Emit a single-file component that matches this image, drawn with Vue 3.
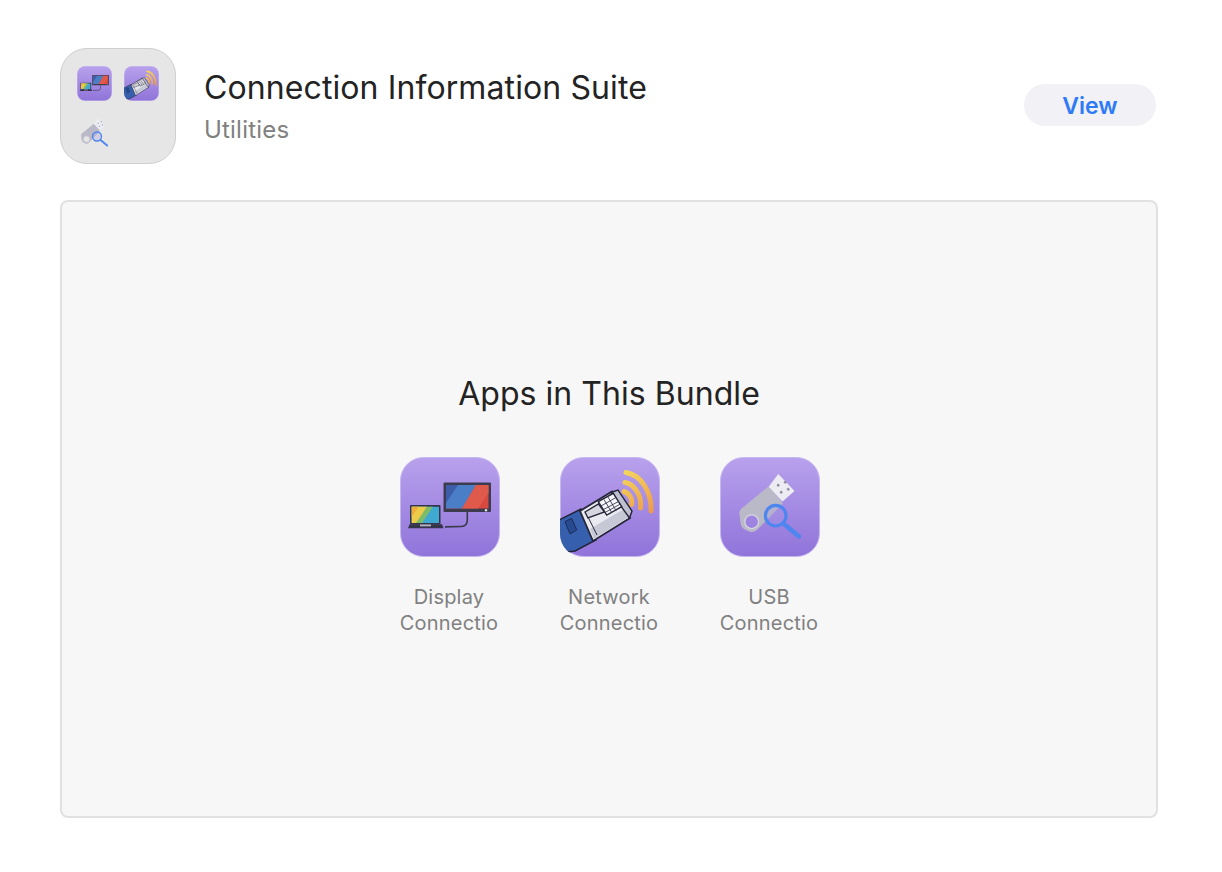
<script setup>
const apps = [
  { icon: '#i-display', line1: 'Display', line2: 'Connectio' },
  { icon: '#i-network', line1: 'Network', line2: 'Connectio' },
  { icon: '#i-usb', line1: 'USB', line2: 'Connectio' },
]
</script>

<template>
  <main class="page">
    <header class="head">
      <div class="tile">
        <svg class="mini" viewBox="0 0 100 100">
          <defs>
            <linearGradient id="g-bg" x1="0" y1="0" x2="0" y2="1">
              <stop offset="0" stop-color="#b8a1ec" />
              <stop offset="1" stop-color="#9074da" />
            </linearGradient>
            <linearGradient id="g-wifi" gradientUnits="userSpaceOnUse" x1="64" y1="14" x2="90" y2="56">
              <stop offset="0" stop-color="#f4d75c" />
              <stop offset="1" stop-color="#ed9a4c" />
            </linearGradient>
            <clipPath id="c-tile"><rect width="100" height="100" rx="23" /></clipPath>
            <clipPath id="c-lap"><rect x="11.500" y="49.500" width="27.500" height="16.500" /></clipPath>
            <symbol id="base" viewBox="0 0 100 100">
              <rect x=".5" y=".5" width="99" height="99" rx="23" fill="url(#g-bg)" stroke="#c6b6f0" />
            </symbol>
            <symbol id="i-display" viewBox="0 0 100 100">
              <use href="#base" />
              <path d="M67.300 55v8q0 6.300-6 6.500L45 69.900" fill="none" stroke="#3a3a4c" stroke-width="1.600" />
              <rect x="43.500" y="25.500" width="47.500" height="29.500" rx="1" fill="#3c3c4e" />
              <rect x="46" y="28" width="42.500" height="23.500" fill="#d9493f" />
              <path d="M46 28H76L62 51.500H46Z" fill="#4a7fc8" />
              <path d="M46 28H58L46 46Z" fill="#3d5da8" />
              <path d="M76 28H88.500V36L78 51.500H62Z" fill="#e05a4c" />
              <circle cx="86" cy="53.300" r="1.200" fill="#e4e4ee" />
              <rect x="10" y="48" width="30.500" height="19.500" rx="1" fill="#35354a" />
              <g clip-path="url(#c-lap)">
                <rect x="11.500" y="49.500" width="27.500" height="16.500" fill="#3fa9d2" />
                <path d="M11.500 49.500H33L22 66H11.500Z" fill="#7fbc6a" />
                <path d="M11.500 49.500H27L16 66H11.500Z" fill="#ecca4a" />
                <path d="M11.500 49.500H19L11.500 60Z" fill="#efad3a" />
              </g>
              <path d="M8 71.300l1.500-4H42l1.500 4Z" fill="#35354a" />
              <rect x="20" y="67.500" width="11" height="1.800" fill="#b9b9c6" />
            </symbol>
            <symbol id="i-network" viewBox="0 0 100 100">
              <use href="#base" />
              <g fill="none" stroke="url(#g-wifi)" stroke-width="5" stroke-linecap="round">
                <path d="M66 15.500C81 18 92 35 91 54" />
                <path d="M65 25.500C74 27 82 38 80.500 51" />
                <path d="M64 34.500C69 36 73 42 71.500 47.500" />
              </g>
              <g clip-path="url(#c-tile)">
                <path d="M-1 63L21 52 36 83 15 94-1 96Z" fill="#3660ad" stroke="#23233a" stroke-width="1.500" />
                <path d="M5 64.700L11.700 61.300 16.700 73 10 77Z" fill="#284a90" stroke="#1f2a55" stroke-width="1" />
                <path d="M20 54L52 34.500 70 61 33 84Z" fill="#e9e9f0" stroke="#26263a" stroke-width="1.800" />
                <path d="M30 72L64 52 69 60 34 82Z" fill="#c7c8d6" />
                <path d="M51 35.500L58 33 72 54 69.500 61Z" fill="#bfc0cf" stroke="#26263a" stroke-width="1.400" />
                <path d="M38.300 44.700L53.300 36.300 61.700 49.700 46.700 58Z" fill="#f7f7fb" stroke="#26263a" stroke-width="1.400" />
                <path d="M41 49L56 40.500M43.500 52.500L58.500 44.500M45 55.500L60.500 47M44 42.500L52 56M48 40L56 53.500" stroke="#3a3a4e" stroke-width=".9" fill="none" />
                <path d="M25 55L38.500 47 44.500 55 28 61Z" fill="#d6d6e0" stroke="#26263a" stroke-width="1.400" />
                <path d="M28 60L37 78" stroke="#26263a" stroke-width="1" />
              </g>
            </symbol>
            <symbol id="usb-art" viewBox="0 0 100 100">
              <path d="M58.300 17L74.500 34 62.500 44.500 48.500 30Z" fill="#ececf2" />
              <g fill="#8d8d9e">
                <rect x="57" y="27" width="2.400" height="2.400" transform="rotate(45 58.200 28.200)" />
                <rect x="64" y="24" width="2.400" height="2.400" transform="rotate(45 65.200 25.200)" />
                <rect x="60" y="34" width="2.400" height="2.400" transform="rotate(45 61.200 35.200)" />
                <rect x="67" y="31" width="2.400" height="2.400" transform="rotate(45 68.200 32.200)" />
              </g>
              <path fill-rule="evenodd" d="M19.500 57Q19 54 21 52L47 30.500Q48.500 29.500 50 31L62 45Q63 46.500 61.500 48L37 73Q33 76 29 74.500L24 72Q21 70 20.500 66ZM25 64.700a6.700 6.700 0 1 0 13.400 0a6.700 6.700 0 1 0-13.400 0Z" fill="#b9b9c8" />
              <circle cx="31.700" cy="64.700" r="6.900" fill="none" stroke="#d4d4de" stroke-width="1.300" />
              <circle cx="55.700" cy="58.700" r="10.300" fill="#a79be3" fill-opacity=".3" stroke="#4e86ef" stroke-width="3.200" />
              <path d="M64.500 67.500L79 79.500" stroke="#4e86ef" stroke-width="4.400" stroke-linecap="round" />
            </symbol>
            <symbol id="i-usb" viewBox="0 0 100 100">
              <use href="#base" />
              <use href="#usb-art" />
            </symbol>
          </defs>
          <use href="#i-display" />
        </svg>
        <svg class="mini" viewBox="0 0 100 100"><use href="#i-network" /></svg>
        <svg class="mini" viewBox="10 5 80 80"><use href="#usb-art" x="0" y="0" width="100" height="100" /></svg>
      </div>
      <div class="meta">
        <h1 class="title">Connection Information Suite</h1>
        <p class="sub">Utilities</p>
      </div>
      <button class="view">View</button>
    </header>

    <section class="card">
      <h2 class="bundle">Apps in This Bundle</h2>
      <ul class="apps">
        <li v-for="a in apps" :key="a.icon" class="app">
          <svg class="big" viewBox="0 0 100 100"><use :href="a.icon" /></svg>
          <span class="lbl">{{ a.line1 }}</span>
          <span class="lbl">{{ a.line2 }}</span>
        </li>
      </ul>
    </section>
  </main>
</template>

<style>
html, body { background: #fff; }
</style>

<style scoped>
.page {
  box-sizing: border-box;
  width: 1222px;
  height: 872px;
  padding: 48px 64px 0 60px;
  font-family: Inter, "Liberation Sans", sans-serif;
  color: #232323;
}
.head {
  display: flex;
  align-items: center;
  height: 116px;
}
.tile {
  box-sizing: border-box;
  width: 116px;
  height: 116px;
  padding: 17px 16px;
  border: 1px solid #cfcfcf;
  border-radius: 27px;
  background: #e6e6e6;
  display: grid;
  grid-template-columns: 35px 35px;
  grid-auto-rows: 35px;
  gap: 12px;
  flex: none;
}
.mini { width: 35px; height: 35px; display: block; filter: blur(.4px); }
.meta { margin-left: 28px; flex: 1; }
.title {
  margin: 0;
  font-size: 32px;
  line-height: 40px;
  font-weight: 400;
  letter-spacing: .1px;
}
.sub {
  margin: 8px 0 0;
  font-size: 24px;
  line-height: 28px;
  letter-spacing: .2px;
  color: #808080;
}
.view {
  width: 132px;
  height: 42px;
  border: 0;
  padding: 2px 0 0;
  border-radius: 21px;
  background: #f1f1f6;
  color: #2f7bf6;
  font: 600 23px Inter, "Liberation Sans", sans-serif;
  margin: 0 2px 2px 0;
}
.card {
  box-sizing: border-box;
  margin-top: 36px;
  height: 618px;
  border: 2px solid #e1e1e1;
  border-radius: 8px;
  background: #f7f7f7;
  padding-top: 170px;
  display: flex;
  flex-direction: column;
  align-items: center;
}
.bundle {
  margin: 0;
  font-size: 32px;
  line-height: 44px;
  font-weight: 400;
  letter-spacing: .05px;
}
.apps {
  list-style: none;
  margin: 41px 0 0 2px;
  padding: 0;
  display: flex;
  gap: 60px;
}
.app {
  width: 100px;
  display: flex;
  flex-direction: column;
  align-items: center;
}
.big { width: 100px; height: 100px; display: block; margin-bottom: 27px; }
.lbl {
  font-size: 20px;
  line-height: 26px;
  letter-spacing: .2px;
  padding-right: 2px;
  color: #808080;
  white-space: nowrap;
}
</style>
